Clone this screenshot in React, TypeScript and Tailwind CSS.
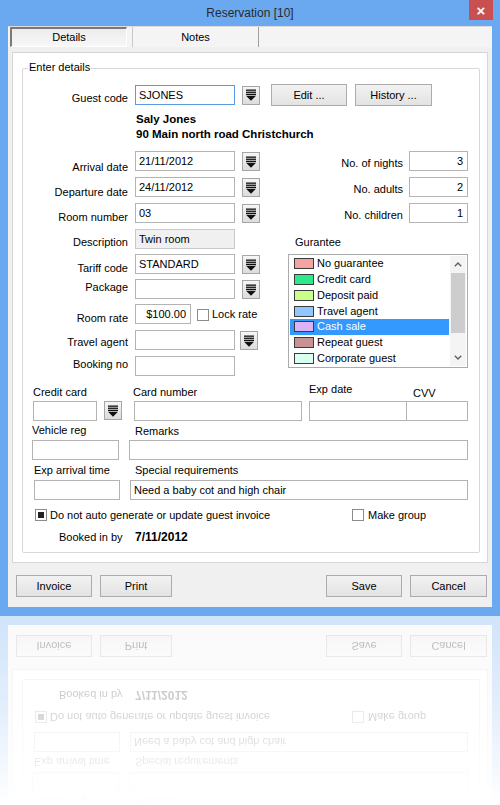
import React from "react";

// Windows 8 style "Reservation" dialog with a mirrored reflection underneath.

const SWATCHES = [
  { label: "No guarantee", color: "bg-[#f4a3a3]" },
  { label: "Credit card", color: "bg-[#2ee88c]" },
  { label: "Deposit paid", color: "bg-[#c9ff8a]" },
  { label: "Travel agent", color: "bg-[#92c6ff]" },
  { label: "Cash sale", color: "bg-[#dcb2f6]", selected: true },
  { label: "Repeat guest", color: "bg-[#c99292]" },
  { label: "Corporate guest", color: "bg-[#d9fff1]" },
];

function DropIcon() {
  return (
    <svg width="10" height="12" viewBox="0 0 10 12">
      <rect x="0" y="0.5" width="10" height="1.3" fill="#111" />
      <rect x="0" y="2.6" width="10" height="1.3" fill="#111" />
      <rect x="0" y="4.7" width="10" height="1.3" fill="#111" />
      <polygon points="0,6.8 10,6.8 5,11.8" fill="#111" />
    </svg>
  );
}

function DropBtn({ className = "" }: { className?: string }) {
  return (
    <div
      className={`flex h-[19px] w-[18px] shrink-0 items-center justify-center border border-[#a6a6a6] bg-linear-to-b from-[#f6f6f6] to-[#dcdcdc] ${className}`}
    >
      <DropIcon />
    </div>
  );
}

function Btn({ label, w }: { label: string; w: string }) {
  return (
    <div
      className={`flex h-[22px] ${w} shrink-0 items-center justify-center border border-[#acacac] bg-linear-to-b from-[#f2f2f2] to-[#e3e3e3] text-[11px] text-black`}
    >
      {label}
    </div>
  );
}

function Box({
  w,
  value = "",
  right = false,
  focus = false,
  ro = false,
  className = "",
}: {
  w: string;
  value?: string;
  right?: boolean;
  focus?: boolean;
  ro?: boolean;
  className?: string;
}) {
  const border = focus
    ? "border-[#5a9ae0]"
    : ro
      ? "border-[#c9c9c9]"
      : "border-[#b3b3b3]";
  return (
    <div
      className={`h-[20px] ${w} shrink-0 border ${border} ${ro ? "bg-[#f0f0f0]" : "bg-white"} px-[3px] text-[11px] leading-[18px] text-black ${right ? "pr-[4px] text-right" : ""} ${className}`}
    >
      {value}
    </div>
  );
}

function Check({ checked = false }: { checked?: boolean }) {
  return (
    <div className="flex h-[12px] w-[12px] shrink-0 items-center justify-center border border-[#8c8c8c] bg-white">
      {checked && <div className="h-[6px] w-[6px] bg-[#222]" />}
    </div>
  );
}

type Row = {
  label: string;
  value?: string;
  mt: string;
  lt: string;
  dd?: boolean;
  ro?: boolean;
};

const LEFT_ROWS: Row[] = [
  { label: "Arrival date", value: "21/11/2012", mt: "mt-0", lt: "mt-[10px]", dd: true },
  { label: "Departure date", value: "24/11/2012", mt: "mt-[6px]", lt: "mt-[9px]", dd: true },
  { label: "Room number", value: "03", mt: "mt-[6px]", lt: "mt-[8px]", dd: true },
  { label: "Description", value: "Twin room", mt: "mt-[6px]", lt: "mt-[7px]", ro: true },
  { label: "Tariff code", value: "STANDARD", mt: "mt-[5px]", lt: "mt-[8px]", dd: true },
  { label: "Package", mt: "mt-[5px]", lt: "mt-[2px]", dd: true },
];

function Label({ text, className = "" }: { text: string; className?: string }) {
  return (
    <div className={`w-[105px] shrink-0 text-right text-[11px] leading-[13px] ${className}`}>
      {text}
    </div>
  );
}

function Window() {
  return (
    <div className="flex h-[616px] w-[500px] flex-col bg-[#6aa9ef]">
      {/* title bar */}
      <div className="flex h-[26px] shrink-0 items-start pl-[31px] pr-[7px]">
        <div className="flex-1 pt-[6px] text-center text-[12px] leading-[14px] text-[#2a2a2a]">
          Reservation [10]
        </div>
        <div className="flex h-[20px] w-[24px] items-center justify-center bg-[#c94f50] text-[15px] font-bold leading-none text-white">
          ×
        </div>
      </div>

      {/* client area */}
      <div className="mx-[8px] flex h-[581px] flex-col bg-[#f0f0f0]">
        {/* tabs */}
        <div className="flex h-[21px] shrink-0 border-t border-[#dcdcdc] bg-[#f4f4f4]">
          <div className="ml-[2px] flex h-[20px] w-[117px] items-center justify-center border-l-2 border-t-2 border-r border-b border-l-[#7a7a7a] border-t-[#7a7a7a] border-r-white border-b-white bg-linear-to-b from-[#ececec] to-[#f7f7f7] text-[11px]">
            Details
          </div>
          <div className="ml-[5px] flex h-[20px] w-[127px] items-center justify-center border-l border-r border-l-[#c8c8c8] border-r-[#a0a0a0] text-[11px]">
            Notes
          </div>
        </div>

        {/* tab panel */}
        <div className="mx-[4px] mt-[5px] h-[511px] border border-[#d6d6d6] bg-white">
          <div className="relative ml-[9px] mt-[15px] h-[485px] w-[458px] rounded-[2px] border border-[#d8d8d8]">
            <div className="absolute -top-[8px] left-[5px] bg-white px-[1px] text-[11px] leading-[13px]">
              Enter details
            </div>

            <div className="flex flex-col">
              {/* guest code */}
              <div className="mt-[15px] flex h-[22px] items-center">
                <Label text="Guest code" className="self-start pt-[8px]" />
                <Box w="w-[100px]" value="SJONES" focus className="ml-[7px]" />
                <DropBtn className="ml-[7px]" />
                <div className="ml-[11px]">
                  <Btn label="Edit ..." w="w-[76px]" />
                </div>
                <div className="ml-[8px]">
                  <Btn label="History ..." w="w-[77px]" />
                </div>
              </div>

              <div className="mt-[6px] pl-[113px] text-[11.5px] font-bold leading-[15px] text-black">
                <div>Saly Jones</div>
                <div>90 Main north road Christchurch</div>
              </div>

              {/* two columns */}
              <div className="mt-[9px] flex">
                <div className="flex w-[264px] flex-col">
                  {LEFT_ROWS.map((r) => (
                    <div key={r.label} className={`flex h-[20px] items-start ${r.mt}`}>
                      <Label text={r.label} className={r.lt} />
                      <Box w="w-[100px]" value={r.value} ro={r.ro} className="ml-[7px]" />
                      {r.dd && <DropBtn className="ml-[7px] mt-[1px]" />}
                    </div>
                  ))}
                  <div className="mt-[5px] flex h-[20px] items-start">
                    <Label text="Room rate" className="mt-[8px]" />
                    <Box w="w-[56px]" value="$100.00" right className="ml-[7px]" />
                    <div className="ml-[6px] mt-[4px] flex items-center">
                      <Check />
                      <span className="ml-[3px] text-[11px] leading-[13px]">Lock rate</span>
                    </div>
                  </div>
                  <div className="mt-[6px] flex h-[20px] items-start">
                    <Label text="Travel agent" className="mt-[6px]" />
                    <Box w="w-[100px]" className="ml-[7px]" />
                    <DropBtn className="ml-[5px] mt-[1px]" />
                  </div>
                  <div className="mt-[6px] flex h-[20px] items-start">
                    <Label text="Booking no" className="mt-[2px]" />
                    <Box w="w-[100px]" className="ml-[7px]" />
                  </div>
                </div>

                <div className="flex w-[181px] flex-col">
                  {[
                    ["No. of nights", "3"],
                    ["No. adults", "2"],
                    ["No. children", "1"],
                  ].map(([l, v], i) => (
                    <div
                      key={l}
                      className={`flex h-[20px] items-start justify-end ${i === 0 ? "" : "mt-[6px]"}`}
                    >
                      <span className="mt-[6px] text-[11px] leading-[13px]">{l}</span>
                      <Box w="w-[59px]" value={v} right className="ml-[6px]" />
                    </div>
                  ))}
                  <div className="mt-[13px] pl-[8px] text-[11px] leading-[13px]">Gurantee</div>
                  <div className="ml-[1px] mt-[5px] flex h-[114px] w-[180px] border border-[#ababab] bg-white">
                    <div className="flex w-[161px] flex-col pl-[1px] pt-[1px]">
                      {SWATCHES.map((s) => (
                        <div
                          key={s.label}
                          className={`flex h-[15.75px] w-[159px] items-center pl-[4px] text-[11px] ${s.selected ? "bg-[#3399ff] text-white" : "text-black"}`}
                        >
                          <div className={`h-[11px] w-[20px] border border-[#3b3b3b] ${s.color}`} />
                          <span className="ml-[3px] leading-none">{s.label}</span>
                        </div>
                      ))}
                    </div>
                    <div className="my-[1px] flex w-[16px] flex-col bg-[#f4f4f4]">
                      <div className="flex h-[17px] items-center justify-center">
                        <svg width="8" height="5" viewBox="0 0 8 5">
                          <path d="M0.8 4.3 L4 1.1 L7.2 4.3" fill="none" stroke="#606060" strokeWidth="1.4" />
                        </svg>
                      </div>
                      <div className="mx-[1px] h-[60px] bg-[#cdcdcd]" />
                      <div className="flex-1" />
                      <div className="flex h-[17px] items-center justify-center">
                        <svg width="8" height="5" viewBox="0 0 8 5">
                          <path d="M0.8 0.7 L4 3.9 L7.2 0.7" fill="none" stroke="#606060" strokeWidth="1.4" />
                        </svg>
                      </div>
                    </div>
                  </div>
                </div>
              </div>

              {/* card row */}
              <div className="mt-[7px] flex items-end text-[11px] leading-[13px]">
                <div className="ml-[10px] flex flex-col">
                  <span className="mb-[2px]">Credit card</span>
                  <div className="flex items-end">
                    <Box w="w-[64px]" />
                    <DropBtn className="mb-[1px] ml-[7px] h-[18px]" />
                  </div>
                </div>
                <div className="ml-[12px] flex flex-col">
                  <span className="mb-[2px] -ml-[1px]">Card number</span>
                  <Box w="w-[168px]" />
                </div>
                <div className="ml-[7px] flex flex-col">
                  <span className="mb-[5px]">Exp date</span>
                  <Box w="w-[98px]" />
                </div>
                <div className="flex flex-col">
                  <span className="mb-[1px] pl-[6px]">CVV</span>
                  <Box w="w-[61px]" className="border-l-0" />
                </div>
              </div>

              <div className="mt-[3px] flex items-end text-[11px] leading-[13px]">
                <div className="ml-[9px] flex flex-col">
                  <span className="mb-[3px]">Vehicle reg</span>
                  <Box w="w-[87px]" />
                </div>
                <div className="ml-[10px] flex flex-col">
                  <span className="mb-[2px] pl-[6px]">Remarks</span>
                  <Box w="w-[339px]" />
                </div>
              </div>

              <div className="mt-[4px] flex items-end text-[11px] leading-[13px]">
                <div className="ml-[11px] flex flex-col">
                  <span className="mb-[3px]">Exp arrival time</span>
                  <Box w="w-[86px]" />
                </div>
                <div className="ml-[10px] flex flex-col">
                  <span className="mb-[3px] pl-[5px]">Special requirements</span>
                  <Box w="w-[338px]" value="Need a baby cot and high chair" />
                </div>
              </div>

              <div className="mt-[9px] flex h-[12px] items-center text-[11px] leading-[13px]">
                <div className="ml-[12px] flex w-[317px] items-center">
                  <Check checked />
                  <span className="ml-[3px]">Do not auto generate or update guest invoice</span>
                </div>
                <Check />
                <span className="ml-[4px]">Make group</span>
              </div>

              <div className="mt-[10px] flex items-baseline">
                <span className="ml-[36px] w-[76px] text-[11px] leading-[13px]">Booked in by</span>
                <span className="text-[12px] font-bold leading-[13px]">7/11/2012</span>
              </div>
            </div>
          </div>
        </div>

        {/* dialog buttons */}
        <div className="mt-[12px] flex pl-[8px] pr-[5px]">
          <Btn label="Invoice" w="w-[76px]" />
          <div className="ml-[8px]">
            <Btn label="Print" w="w-[72px]" />
          </div>
          <div className="ml-auto">
            <Btn label="Save" w="w-[76px]" />
          </div>
          <div className="ml-[8px]">
            <Btn label="Cancel" w="w-[77px]" />
          </div>
        </div>
      </div>
    </div>
  );
}

export default function App() {
  return (
    <div className="h-[805px] w-[500px] overflow-hidden bg-white font-['Liberation_Sans',Arial,sans-serif] text-black">
      <Window />
      <div aria-hidden className="relative h-[189px] overflow-hidden">
        <div className="-scale-y-100 opacity-30 blur-[0.4px]">
          <Window />
        </div>
        <div className="absolute inset-0 bg-linear-to-b from-white/0 via-white/40 to-white" />
      </div>
    </div>
  );
}
